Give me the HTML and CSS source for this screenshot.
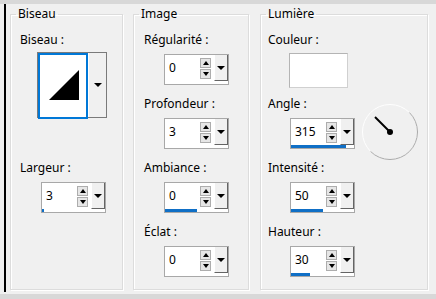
FILE: index.html
```html
<!DOCTYPE html>
<html lang="fr">
<head>
    <meta charset="UTF-8">
    <title>Biseau intérieur</title>
    <link rel="stylesheet" href="styles.css">
</head>
<body>
    <div class="window">
        <div class="panel">
            <div class="content">

                <fieldset class="group group-biseau">
                    <legend>Biseau</legend>
                    <div class="field">
                        <span class="label">Biseau :</span>
                        <div class="bevel-pick">
                            <div class="bevel-preview">
                                <svg width="46" height="62" viewBox="0 0 46 62">
                                    <polygon points="9,45 39,15 39,45" fill="#000"/>
                                </svg>
                            </div>
                            <div class="bevel-drop"><span class="drop-arrow"></span></div>
                        </div>
                    </div>
                    <div class="field field-largeur">
                        <span class="label">Largeur :</span>
                        <div class="spin">
                            <div class="spin-main">
                                <span class="spin-value">3</span>
                                <div class="spin-arrows"><span class="spin-up"></span><span class="spin-down"></span></div>
                                <span class="spin-drop"><span class="drop-arrow"></span></span>
                            </div>
                            <div class="spin-track"><div class="spin-fill" style="width: 2px"></div></div>
                        </div>
                    </div>
                </fieldset>

                <fieldset class="group group-image">
                    <legend>Image</legend>
                    <div class="field">
                        <span class="label">Régularité :</span>
                        <div class="spin">
                            <div class="spin-main">
                                <span class="spin-value">0</span>
                                <div class="spin-arrows"><span class="spin-up"></span><span class="spin-down"></span></div>
                                <span class="spin-drop"><span class="drop-arrow"></span></span>
                            </div>
                            <div class="spin-track"></div>
                        </div>
                    </div>
                    <div class="field">
                        <span class="label">Profondeur :</span>
                        <div class="spin">
                            <div class="spin-main">
                                <span class="spin-value">3</span>
                                <div class="spin-arrows"><span class="spin-up"></span><span class="spin-down"></span></div>
                                <span class="spin-drop"><span class="drop-arrow"></span></span>
                            </div>
                            <div class="spin-track"></div>
                        </div>
                    </div>
                    <div class="field">
                        <span class="label">Ambiance :</span>
                        <div class="spin">
                            <div class="spin-main">
                                <span class="spin-value">0</span>
                                <div class="spin-arrows"><span class="spin-up"></span><span class="spin-down"></span></div>
                                <span class="spin-drop"><span class="drop-arrow"></span></span>
                            </div>
                            <div class="spin-track"><div class="spin-fill" style="width: 50%"></div></div>
                        </div>
                    </div>
                    <div class="field">
                        <span class="label">Éclat :</span>
                        <div class="spin">
                            <div class="spin-main">
                                <span class="spin-value">0</span>
                                <div class="spin-arrows"><span class="spin-up"></span><span class="spin-down"></span></div>
                                <span class="spin-drop"><span class="drop-arrow"></span></span>
                            </div>
                            <div class="spin-track"></div>
                        </div>
                    </div>
                </fieldset>

                <fieldset class="group group-lumiere">
                    <legend>Lumière</legend>
                    <div class="field">
                        <span class="label">Couleur :</span>
                        <div class="color-swatch"></div>
                    </div>
                    <div class="field-row">
                        <div class="field">
                            <span class="label">Angle :</span>
                            <div class="spin">
                                <div class="spin-main">
                                    <span class="spin-value">315</span>
                                    <div class="spin-arrows"><span class="spin-up"></span><span class="spin-down"></span></div>
                                    <span class="spin-drop"><span class="drop-arrow"></span></span>
                                </div>
                                <div class="spin-track"><div class="spin-fill" style="width: 87.5%"></div></div>
                            </div>
                        </div>
                        <svg class="dial" width="58" height="58" viewBox="0 0 58 58">
                            <circle cx="29" cy="29" r="27.5" fill="none" stroke="#fff" stroke-width="1"/>
                            <path d="M 48.45 9.55 A 27.5 27.5 0 0 1 9.55 48.45" fill="none" stroke="#a8a8a8" stroke-width="1"/>
                            <line x1="14" y1="14" x2="29" y2="29" stroke="#000" stroke-width="2"/>
                            <circle cx="29" cy="29" r="3" fill="#000"/>
                        </svg>
                    </div>
                    <div class="field">
                        <span class="label">Intensité :</span>
                        <div class="spin">
                            <div class="spin-main">
                                <span class="spin-value">50</span>
                                <div class="spin-arrows"><span class="spin-up"></span><span class="spin-down"></span></div>
                                <span class="spin-drop"><span class="drop-arrow"></span></span>
                            </div>
                            <div class="spin-track"><div class="spin-fill" style="width: 50%"></div></div>
                        </div>
                    </div>
                    <div class="field">
                        <span class="label">Hauteur :</span>
                        <div class="spin">
                            <div class="spin-main">
                                <span class="spin-value">30</span>
                                <div class="spin-arrows"><span class="spin-up"></span><span class="spin-down"></span></div>
                                <span class="spin-drop"><span class="drop-arrow"></span></span>
                            </div>
                            <div class="spin-track"><div class="spin-fill" style="width: 30%"></div></div>
                        </div>
                    </div>
                </fieldset>

            </div>
        </div>
    </div>
</body>
</html>
```

FILE: styles.css
```css
body { margin: 0; background-color: #d8d8d8; font-family: "Noto Sans", "Open Sans", sans-serif; font-size: 12px; color: #000; }
.window { width: 436px; height: 299px; }
.panel { margin-top: 4px; height: 290px; padding-left: 4px; background-color: #f0f0f0; }
.content { display: flex; height: 288px; border-left: 2px solid #000; padding-left: 4px; }

/* group boxes */
.group { box-sizing: border-box; margin: 2px 0 0 0; padding: 10px 0 0 0; height: 284px; border: 1px solid #dcdcdc; box-shadow: inset 1px 1px 0 #fff, 1px 1px 0 #fff; display: flex; flex-direction: column; min-width: 0; }
.group legend { margin-left: 5px; padding: 0 2px; line-height: 16px; }
.group-biseau { width: 113px; }
.group-image { width: 116px; margin-left: 10px; }
.group-lumiere { width: 168px; margin-left: 11px; }

.field { display: flex; flex-direction: column; align-items: flex-start; }
.label { line-height: 16px; white-space: nowrap; }
.field .spin { margin-top: 6px; }
.group-image .field + .field, .group-lumiere .field-row + .field, .group-lumiere .field + .field { margin-top: 11px; }

.group-biseau .label { padding-left: 9px; }
.group-biseau .bevel-pick { margin: 4px 0 0 26px; }
.group-biseau .spin { margin-left: 30px; }
.field-largeur { margin-top: 42px; }

.group-image .label { padding-left: 10px; }
.group-image .spin { margin-left: 30px; }

.group-lumiere .label { padding-left: 7px; }
.group-lumiere .spin { margin-left: 29px; }
.field-row { display: flex; margin-top: 8px; }
.dial { align-self: flex-end; margin: 0 0 -12px 6px; }

/* bevel picker */
.bevel-pick { display: flex; width: 68px; height: 64px; border: 1px solid #7a7a7a; }
.bevel-preview { width: 46px; height: 62px; border: 2px solid #0078d7; background-color: #fff; }
.bevel-preview svg { display: block; }
.bevel-drop { flex: 1; display: flex; align-items: center; justify-content: center; background-color: #f0f0f0; border-left: 1px solid #fff; }

/* colour */
.color-swatch { margin: 5px 0 0 28px; width: 57px; height: 33px; background-color: #fff; border: 1px solid #d0d0d0; border-top-color: #b4b4b4; border-left-color: #b4b4b4; }

/* spin control */
.spin { display: flex; flex-direction: column; width: 63px; height: 29px; border: 1px solid #a8a8a8; background-color: #fff; }
.spin-main { display: flex; flex: 1; align-items: center; }
.spin-value { flex: 1; padding-left: 4px; line-height: 16px; }
.spin-arrows { display: flex; flex-direction: column; gap: 1px; margin-right: 3px; }
.spin-up, .spin-down { display: flex; align-items: center; justify-content: center; box-sizing: border-box; width: 11px; height: 10px; border: 1px solid #adadad; background-color: #e6e6e6; }
.spin-up::after { content: ""; border-left: 3.5px solid transparent; border-right: 3.5px solid transparent; border-bottom: 4px solid #000; }
.spin-down::after { content: ""; border-left: 3.5px solid transparent; border-right: 3.5px solid transparent; border-top: 4px solid #000; }
.spin-drop { align-self: stretch; display: flex; align-items: center; justify-content: center; box-sizing: border-box; width: 14px; background-color: #f0f0f0; border-left: 1px solid #fff; border-right: 1px solid #646464; border-bottom: 1px solid #646464; }
.drop-arrow { border-left: 4px solid transparent; border-right: 4px solid transparent; border-top: 4px solid #000; }
.spin-track { height: 3px; }
.spin-fill { height: 3px; background-color: #0f6fc6; }
```
